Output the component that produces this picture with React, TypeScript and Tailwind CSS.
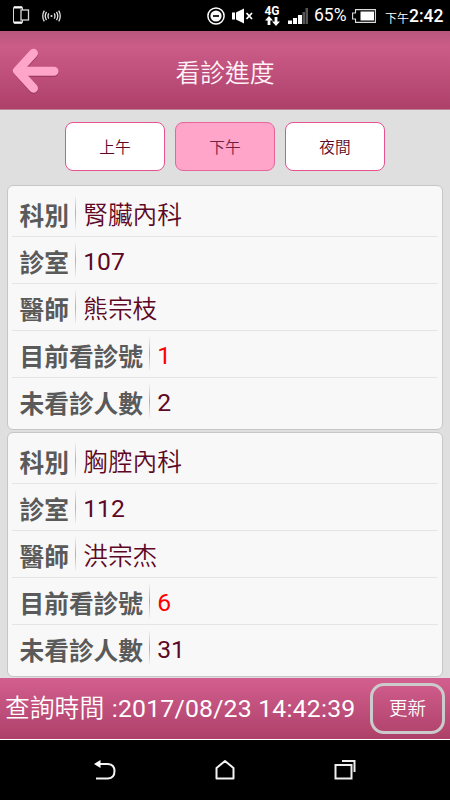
import React, { useState } from 'react';
import clsx from 'clsx';

interface Clinic {
  department: string;
  room: string;
  doctor: string;
  current: string;
  waiting: string;
}

const SESSIONS = ['上午', '下午', '夜間'];

const CLINICS: Clinic[] = [
  { department: '腎臟內科', room: '107', doctor: '熊宗枝', current: '1', waiting: '2' },
  { department: '胸腔內科', room: '112', doctor: '洪宗杰', current: '6', waiting: '31' },
];

function StatusBar() {
  return (
    <div className="h-[31px] shrink-0 bg-black flex items-center text-white pl-[13px] pr-[7px]">
      <svg width="17" height="19" viewBox="0 0 17 19" fill="none" stroke="#d8d8d8">
        <path d="M9.5 4V1.5Q9.5 .8 8.8 .8H1.2Q.5 .8 .5 1.5V16.5Q.5 17.2 1.2 17.2H8.8Q9.5 17.2 9.5 16.5V14" />
        <path d="M1 1.5H9M1 16.5H9" stroke="#fff" strokeWidth="2" />
        <rect x="8" y="4" width="7.5" height="10" strokeWidth="1.3" />
      </svg>
      <svg className="ml-[12px]" width="20" height="14" viewBox="0 0 20 14" fill="none" stroke="#e2e2e2" strokeWidth="1.3">
        <circle cx="9.5" cy="7" r="1.1" fill="#e2e2e2" stroke="none" />
        <path d="M6.8 4.3Q5.2 7 6.8 9.7M4.5 2.8Q2 7 4.5 11.2M2.3 1.6Q-.8 7 2.3 12.4M12.2 4.3Q13.8 7 12.2 9.7M14.5 2.8Q17 7 14.5 11.2M16.7 1.6Q19.8 7 16.7 12.4" />
      </svg>
      <svg className="ml-auto" width="18" height="18" viewBox="0 0 18 18">
        <circle cx="9" cy="9" r="8.1" fill="none" stroke="#fff" strokeWidth="1.5" />
        <circle cx="9" cy="9" r="5.6" fill="#fff" />
        <path d="M6 9H12" stroke="#000" strokeWidth="1.7" />
      </svg>
      <svg className="ml-[7px]" width="22" height="16" viewBox="0 0 22 16">
        <path d="M0 4.5H3V11.5H0ZM4 4.5L12 .5V15.5L4 11.5Z" fill="#fff" />
        <path d="M14.5 5L20 11M20 5L14.5 11" stroke="#fff" strokeWidth="1.8" />
      </svg>
      <div className="ml-[10px] w-[16px] flex flex-col items-center">
        <span className="font-['Roboto'] font-bold text-[12px] leading-[10px]">4G</span>
        <svg width="15" height="10" viewBox="0 0 15 10" fill="#fff">
          <path d="M4 0L8 4.5H5.4V9H2.6V4.5H0ZM11 10L7 5.5H9.6V1H12.4V5.5H15Z" />
        </svg>
      </div>
      <svg className="ml-[8px]" width="21" height="16" viewBox="0 0 21 16">
        <path d="M0 12.5H4V16H0ZM5 10H9V16H5ZM10 7H14V16H10Z" fill="#fff" />
        <path d="M14.5 4H17V16H14.5ZM17.5 0H20V16H17.5Z" fill="#555" />
      </svg>
      <span className="ml-[5px] w-[34px] text-[17.5px] leading-none pt-px">65%</span>
      <svg className="ml-[4px]" width="24" height="14" viewBox="0 0 24 14">
        <path d="M3.5 .6H23.4V13.4H3.5V10H.6V4H3.5Z" fill="none" stroke="#ddd" strokeWidth="1.1" />
        <rect x="8.5" y="2.5" width="13.5" height="9" fill="#fff" />
      </svg>
      <span className="ml-[9px] w-[24px] text-[12px] leading-none font-[350] pt-[6px] whitespace-nowrap">下午</span>
      <span className="w-[34px] text-[17.5px] leading-none font-medium pt-[2px] whitespace-nowrap">2:42</span>
    </div>
  );
}

function Header() {
  return (
    <header className="relative h-[79px] shrink-0 flex items-center justify-center bg-linear-to-b from-[#b9577d] via-[#cb5c88] via-20% to-[#ad4069] border-b border-[#bd829a]">
      <svg className="absolute left-[12px] top-[17px]" width="48" height="46" viewBox="0 0 48 46" fill="none" strokeWidth="9" strokeLinecap="round" strokeLinejoin="round">
        <path d="M21.5 6.2L5.8 23.6L21.5 41.2M7 24.2H42" stroke="#913458" />
        <path d="M21.5 5.3L5.5 22.7L21.5 40.2M7 23.2H42" stroke="#ffa5ca" />
      </svg>
      <h1 className="text-[24.8px] leading-none font-[350] text-[#fff3f8] pt-[8px]">看診進度</h1>
    </header>
  );
}

interface RowProps {
  label: string;
  value: string;
  highlight?: boolean;
}

function Row({ label, value, highlight }: RowProps) {
  const isNumber = /^\d+$/.test(value);

  return (
    <div className="h-[47px] flex items-center pl-[7.5px] border-b border-[#e4e5e6] last:border-b-0">
      <span className="text-[24.7px] leading-[36px] font-bold text-[#5a5a5a] pt-[8px]">{label}</span>
      <span className="ml-[6px] w-px h-[34px] bg-linear-to-b from-[#f1f1f1] via-[#b0b0b0] to-[#f1f1f1]" />
      <span
        className={clsx(
          'ml-[7.3px] text-[24.7px] leading-[36px]',
          isNumber ? 'pt-[4px]' : 'pt-[6px] font-[350]',
          highlight ? 'text-[#ff0000]' : 'text-[#5e0825]'
        )}
      >
        {value}
      </span>
    </div>
  );
}

function ClinicCard({ clinic }: { clinic: Clinic }) {
  return (
    <section className="h-[245px] shrink-0 bg-[#f8f8f8] border border-[#c6c6c6] rounded-[6px] px-[4px] pt-[4px]">
      <Row label="科別" value={clinic.department} />
      <Row label="診室" value={clinic.room} />
      <Row label="醫師" value={clinic.doctor} />
      <Row label="目前看診號" value={clinic.current} highlight />
      <Row label="未看診人數" value={clinic.waiting} />
    </section>
  );
}

function NavBar() {
  return (
    <nav className="h-[60px] shrink-0 bg-black flex items-center justify-center gap-[98px]">
      <svg width="22" height="22" viewBox="0 0 22 22" fill="none" stroke="#f4f4f4" strokeWidth="2">
        <path d="M4 5H14Q20.5 5.5 20.5 12Q20.5 19 14 19.5H2" />
        <path d="M0 5L6.5 1V9Z" fill="#fff" stroke="none" />
      </svg>
      <svg width="22" height="22" viewBox="0 0 22 22" fill="none" stroke="#f4f4f4" strokeWidth="2" strokeLinejoin="round">
        <path d="M2.5 9L11 2L19.5 9V19.5H2.5Z" />
      </svg>
      <svg width="22" height="22" viewBox="0 0 22 22" fill="none" stroke="#eee" strokeWidth="2">
        <rect x="1.5" y="6" width="16" height="13.5" />
        <path d="M8 2H20.5V13" />
      </svg>
    </nav>
  );
}

export default function App() {
  const [session, setSession] = useState('下午');

  return (
    <div className="w-[450px] h-[800px] overflow-hidden flex flex-col bg-[#dfdfdf] font-['Roboto','Noto_Sans_CJK_TC',sans-serif]">
      <StatusBar />
      <Header />

      {/* Session switch */}
      <div className="flex justify-center gap-[10px] pt-[11.5px] pb-[13.5px] shrink-0">
        {SESSIONS.map((name) => (
          <button
            key={name}
            onClick={() => setSession(name)}
            className={clsx(
              'w-[100px] h-[49.5px] rounded-[8px] border text-[15.7px] leading-none font-[350] pt-[3px]',
              name === session ? 'bg-[#ffa5ca] border-[#e8659a] text-[#6f2444]' : 'bg-white border-[#e75091] text-[#5e0825]'
            )}
          >
            {name}
          </button>
        ))}
      </div>

      <main className="flex-1 min-h-0 overflow-hidden flex flex-col gap-[2px] px-[7px]">
        {CLINICS.map((clinic) => (
          <ClinicCard key={clinic.room} clinic={clinic} />
        ))}
      </main>

      <footer className="h-[62px] shrink-0 flex items-center pl-[5px] pr-[5px] bg-linear-to-b from-[#d35f8f] to-[#ad4069] border-b border-white text-white">
        <div className="flex items-baseline text-[24.8px] leading-none whitespace-nowrap pt-[2px]">
          <span className="font-[350]">查詢時間</span>
          <span className="ml-[7.5px] tracking-[0.2px]">:2017/08/23 14:42:39</span>
        </div>
        <button className="ml-auto w-[75px] h-[51px] rounded-[14px] border-[3px] border-[#cbcbcb] text-[18.5px] leading-none font-[350] pt-[2px]">更新</button>
      </footer>

      <NavBar />
    </div>
  );
}
